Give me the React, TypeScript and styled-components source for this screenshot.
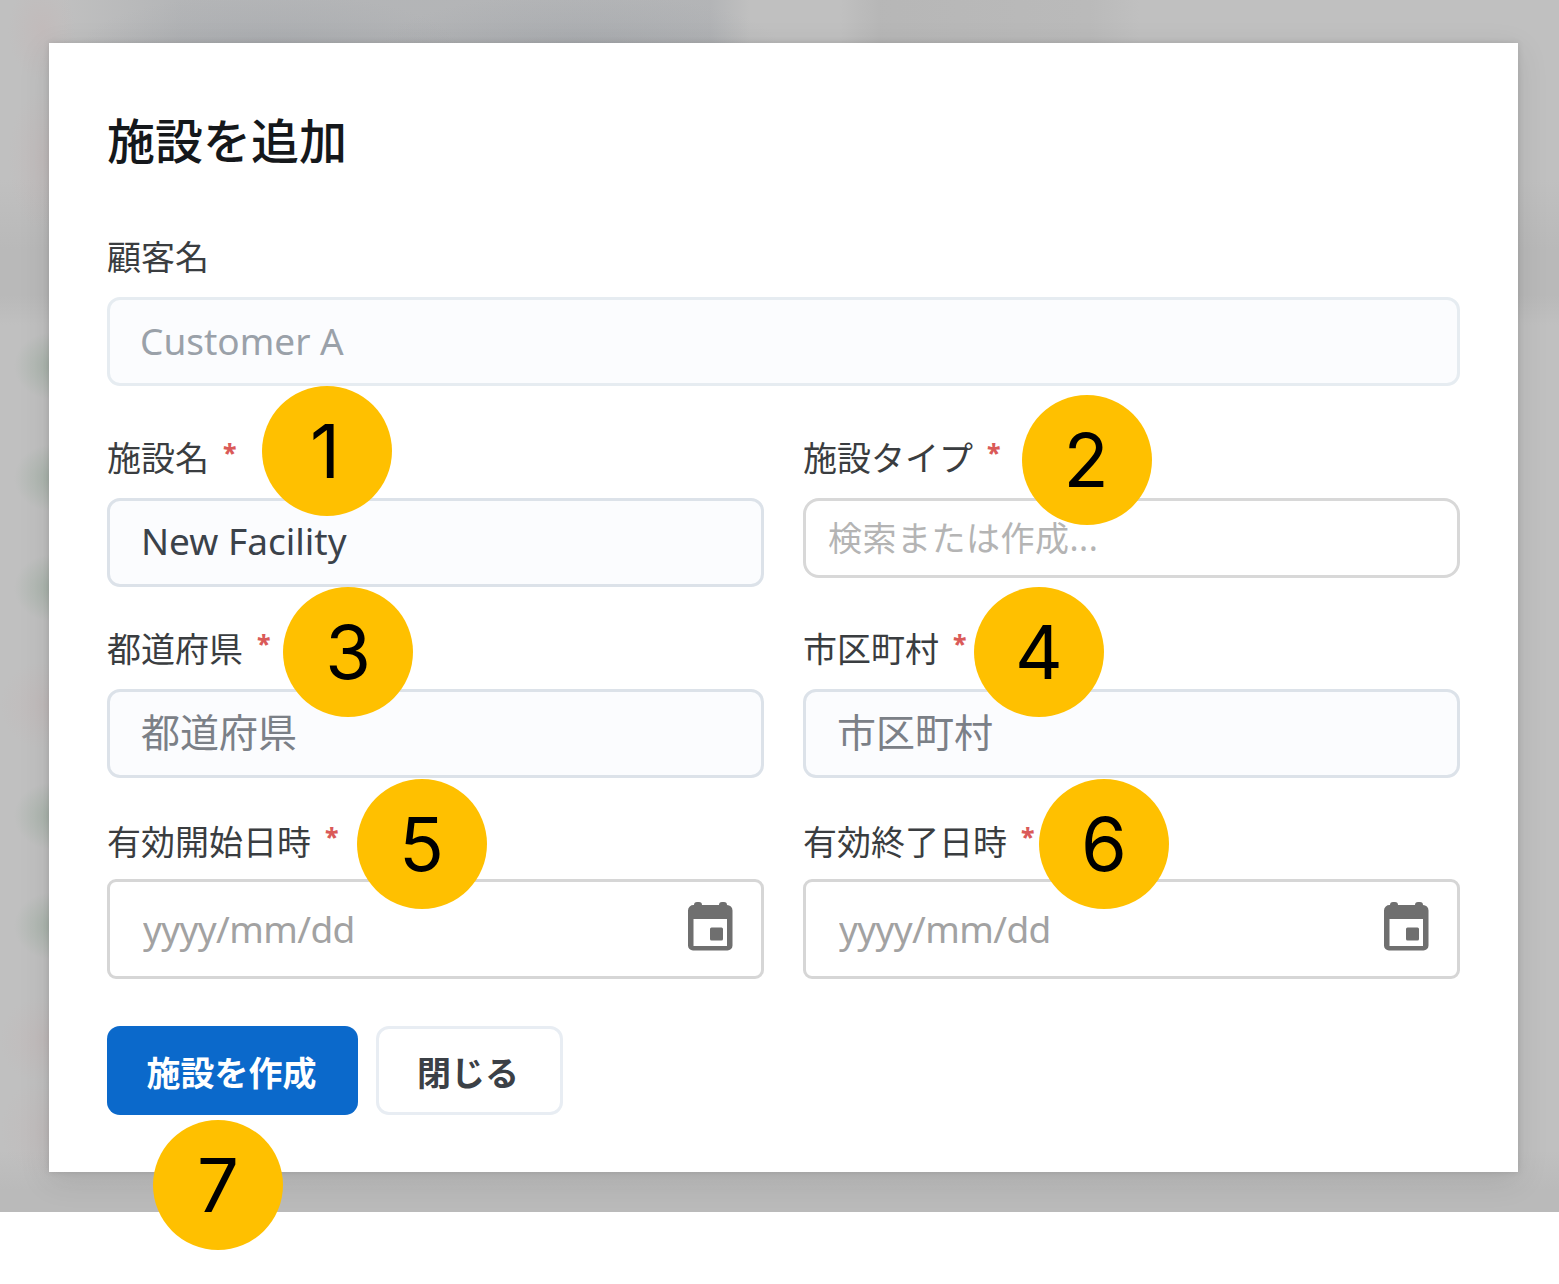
import React from "react";
import styled, { createGlobalStyle } from "styled-components";

const GlobalStyle = createGlobalStyle`
  *, *::before, *::after { box-sizing: border-box; }
  body {
    margin: 0;
    background: #ffffff;
    font-family: "Noto Sans", "Noto Sans CJK JP", sans-serif;
  }
`;

const Page = styled.main`
  position: relative;
  width: 1559px;
  height: 1284px;
  overflow: hidden;
  background: #ffffff;
`;

const Backdrop = styled.div`
  height: 1212px;
  padding: 43px 41px 40px 49px;
  overflow: hidden;
  background:
    radial-gradient(ellipse 40px 34px at 54px 366px, rgba(130, 160, 136, 0.4), transparent),
    radial-gradient(ellipse 40px 34px at 54px 478px, rgba(130, 160, 136, 0.4), transparent),
    radial-gradient(ellipse 40px 34px at 54px 588px, rgba(130, 160, 136, 0.4), transparent),
    radial-gradient(ellipse 44px 44px at 44px 705px, rgba(196, 172, 172, 0.26), transparent),
    radial-gradient(ellipse 40px 34px at 54px 816px, rgba(130, 160, 136, 0.4), transparent),
    radial-gradient(ellipse 40px 34px at 54px 926px, rgba(130, 160, 136, 0.4), transparent),
    radial-gradient(ellipse 44px 44px at 44px 1040px, rgba(196, 172, 172, 0.26), transparent),
    radial-gradient(ellipse 44px 50px at 44px 1130px, rgba(196, 172, 172, 0.2), transparent),
    radial-gradient(ellipse 34px 50px at 42px 30px, rgba(200, 168, 168, 0.22), transparent),
    radial-gradient(ellipse 34px 70px at 42px 160px, rgba(200, 168, 168, 0.18), transparent),
    radial-gradient(ellipse 190px 52px at 270px 46px, rgba(146, 151, 158, 0.26), transparent),
    radial-gradient(ellipse 200px 52px at 580px 46px, rgba(146, 151, 158, 0.3), transparent),
    linear-gradient(90deg, transparent 60px, rgba(146, 151, 158, 0.26) 180px, rgba(146, 151, 158, 0.28) 710px, transparent 750px) 0 0 / 100% 60px no-repeat,
    linear-gradient(90deg, transparent 840px, rgba(150, 150, 150, 0.22) 880px, rgba(150, 150, 150, 0.14) 1090px, transparent 1140px) 0 0 / 100% 60px no-repeat,
    linear-gradient(180deg, #c0c0c0 0, #c0c0c0 180px, #b9b9b9 250px, #b9b9b9 295px, #c0c0c0 325px, #c0c0c0 1150px, #bababa 1190px);
`;

const Dialog = styled.section`
  height: 1129px;
  padding: 65px 58px 0;
  background: #ffffff;
  box-shadow: 0 8px 30px rgba(0, 0, 0, 0.1), 0 0 6px rgba(0, 0, 0, 0.12);
`;

const Title = styled.h1`
  margin: 0 0 64px;
  height: 60px;
  font: 500 48px/60px "Noto Sans CJK JP", sans-serif;
  color: #15181b;
`;

const Form = styled.form`
  display: flex;
  flex-direction: column;
`;

const Row = styled.div<{ $gap: number }>`
  display: grid;
  grid-auto-columns: 1fr;
  grid-auto-flow: column;
  column-gap: 39px;
  align-items: start;
  margin-bottom: ${(p) => p.$gap}px;
`;

const Field = styled.div<{ $gap: number }>`
  display: flex;
  flex-direction: column;
  gap: ${(p) => p.$gap}px;
  min-width: 0;
`;

const Label = styled.label`
  display: flex;
  gap: 14px;
  height: 48px;
  font: 400 34px/48px "Noto Sans CJK JP", sans-serif;
  color: #3a3d40;
`;

const Required = styled.span`
  font-family: "Noto Sans", sans-serif;
  font-size: 25px;
  font-weight: 800;
  line-height: 39px;
  color: #da5a58;
`;

type Tone = "disabled" | "filled" | "search" | "date";

const tones: Record<Tone, { height: number; border: string; bg: string; radius: number; pad: string }> = {
  disabled: { height: 89, border: "#e6ecf1", bg: "#fbfcfe", radius: 13, pad: "0 30px 2px 30px" },
  filled: { height: 89, border: "#dce2e9", bg: "#fbfcfe", radius: 13, pad: "0 30px 4px 31px" },
  search: { height: 80, border: "#d8d8d8", bg: "#ffffff", radius: 16, pad: "0 22px 0 22px" },
  date: { height: 100, border: "#d6d6d6", bg: "#ffffff", radius: 9, pad: "0 27px 2px 33px" },
};

const Control = styled.div<{ $tone: Tone }>`
  display: flex;
  align-items: center;
  justify-content: space-between;
  height: ${(p) => tones[p.$tone].height}px;
  padding: ${(p) => tones[p.$tone].pad};
  border: 3px solid ${(p) => tones[p.$tone].border};
  border-radius: ${(p) => tones[p.$tone].radius}px;
  background: ${(p) => tones[p.$tone].bg};
`;

const Input = styled.input<{ $size: number; $color: string; $spacing?: number }>`
  flex: 1;
  min-width: 0;
  height: 64px;
  padding: 0;
  border: 0;
  outline: 0;
  background: transparent;
  font-family: "Noto Sans", "Noto Sans CJK JP", sans-serif;
  font-size: ${(p) => p.$size}px;
  letter-spacing: ${(p) => p.$spacing ?? 0}px;
  color: ${(p) => p.$color};
  &::placeholder { color: ${(p) => p.$color}; opacity: 1; }
`;

const CalendarSvg = styled.svg`
  flex: none;
  width: 48px;
  height: 50px;
  margin-bottom: 5px;
`;

const Actions = styled.div`
  display: flex;
  gap: 18px;
`;

const Button = styled.button<{ $primary?: boolean }>`
  width: ${(p) => (p.$primary ? 251 : 187)}px;
  height: 89px;
  padding: ${(p) => (p.$primary ? "2px 2px 0 0" : "2px 3px 0 0")};
  border: ${(p) => (p.$primary ? "0" : "3px solid #e8edf3")};
  border-radius: 13px;
  background: ${(p) => (p.$primary ? "#0b69cb" : "#ffffff")};
  color: ${(p) => (p.$primary ? "#ffffff" : "#3b4046")};
  font: 700 34px/48px "Noto Sans CJK JP", sans-serif;
`;

const Badge = styled.span<{ $x: number; $y: number; $nudge?: number }>`
  position: absolute;
  left: ${(p) => p.$x - 65}px;
  top: ${(p) => p.$y - 65}px;
  display: flex;
  align-items: center;
  justify-content: center;
  width: 130px;
  height: 130px;
  padding-right: ${(p) => p.$nudge ?? 0}px;
  border-radius: 50%;
  background: #ffc000;
  color: #000000;
  font: 400 74px/130px Inter, "Liberation Sans", sans-serif;
`;

const Calendar = () => (
  <CalendarSvg viewBox="0 0 48 50" fill="#6f6f6f" aria-hidden="true">
    <path
      fillRule="evenodd"
      d="M8 4a3 3 0 0 1 3-3h2a3 3 0 0 1 3 3h17a3 3 0 0 1 3-3h2a3 3 0 0 1 3 3 5.500 5.500 0 0 1 5.500 5.500v35a5 5 0 0 1-5 5H7a5 5 0 0 1-5-5v-35A5.500 5.500 0 0 1 8 4ZM7.500 18v27h33.500V18Z"
    />
    <rect x="24" y="26.500" width="13" height="13" rx="1.500" />
  </CalendarSvg>
);

interface FieldProps {
  label: string;
  required?: boolean;
  tone: Tone;
  size: number;
  color: string;
  spacing?: number;
  value?: string;
  placeholder?: string;
}

const FormField = ({ label, required, tone, size, color, spacing, value, placeholder }: FieldProps) => (
  <Field $gap={tone === "date" ? 14 : 17}>
    <Label>
      {label}
      {required && <Required>*</Required>}
    </Label>
    <Control $tone={tone}>
      <Input $size={size} $color={color} $spacing={spacing} defaultValue={value} placeholder={placeholder} aria-label={label} />
      {tone === "date" && <Calendar />}
    </Control>
  </Field>
);

const steps = [
  { x: 327, y: 451, nudge: 4 },
  { x: 1087, y: 460, nudge: 2 },
  { x: 348, y: 652 },
  { x: 1039, y: 652 },
  { x: 422, y: 844, nudge: 1 },
  { x: 1104, y: 844 },
  { x: 218, y: 1185 },
];

export default function App() {
  return (
    <Page>
      <GlobalStyle />
      <Backdrop>
        <Dialog role="dialog">
          <Title>施設を追加</Title>
          <Form>
            <Row $gap={47}>
              <FormField label="顧客名" tone="disabled" size={37} color="#9aa1a9" value="Customer A" />
            </Row>
            <Row $gap={37}>
              <FormField label="施設名" required tone="filled" size={37} color="#3b424a" value="New Facility" />
              <FormField label="施設タイプ" required tone="search" size={34} spacing={0.5} color="#b4b4b4" placeholder="検索または作成..." />
            </Row>
            <Row $gap={39}>
              <FormField label="都道府県" required tone="filled" size={39} color="#7b8087" placeholder="都道府県" />
              <FormField label="市区町村" required tone="filled" size={39} color="#7b8087" placeholder="市区町村" />
            </Row>
            <Row $gap={47}>
              <FormField label="有効開始日時" required tone="date" size={37} spacing={-0.6} color="#a2a2a2" placeholder="yyyy/mm/dd" />
              <FormField label="有効終了日時" required tone="date" size={37} spacing={-0.6} color="#a2a2a2" placeholder="yyyy/mm/dd" />
            </Row>
            <Actions>
              <Button type="button" $primary>施設を作成</Button>
              <Button type="button">閉じる</Button>
            </Actions>
          </Form>
        </Dialog>
      </Backdrop>
      {steps.map((s, i) => (
        <Badge key={i} $x={s.x} $y={s.y} $nudge={s.nudge}>{i + 1}</Badge>
      ))}
    </Page>
  );
}
